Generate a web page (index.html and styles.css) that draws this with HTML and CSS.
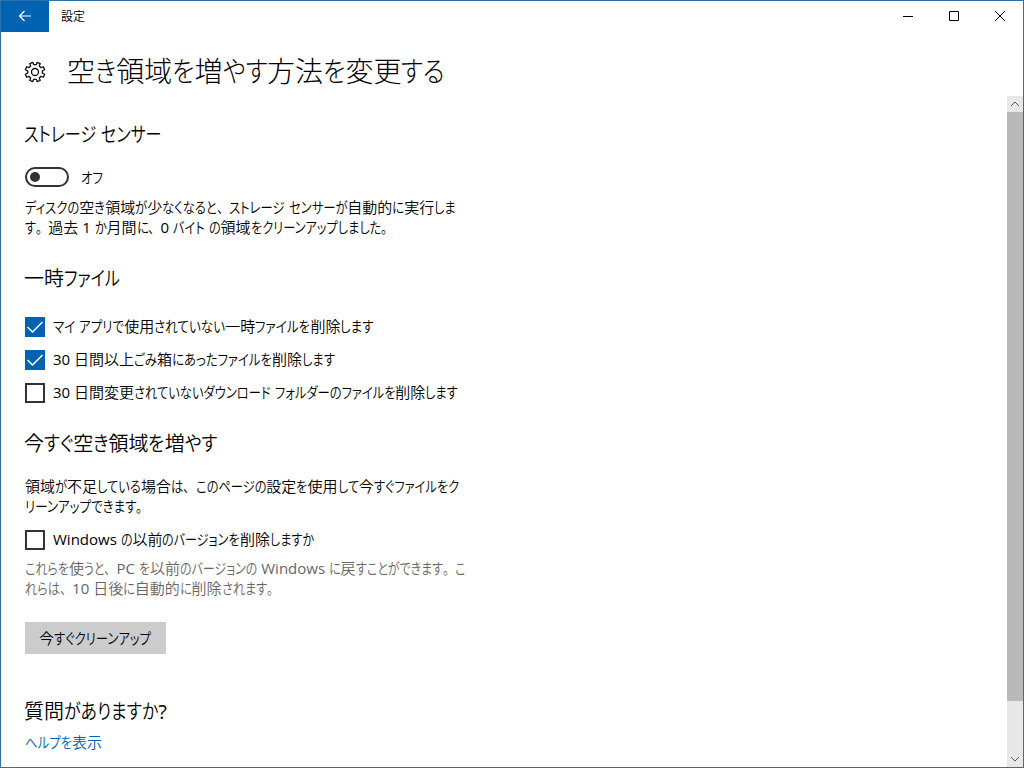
FILE: index.html
```
<!DOCTYPE html>
<html lang="ja">
<head>
<meta charset="utf-8">
<title>設定</title>
<link rel="stylesheet" href="styles.css">
</head>
<body>
<div class="window">
  <header class="titlebar">
    <button class="back" aria-label="戻る"><svg width="14" height="12" viewBox="0 0 14 12"><path d="M13 6H1.5M6.5 1L1.5 6l5 5" /></svg></button>
    <span class="app-name">設定</span>
    <div class="controls">
      <svg width="46" height="31" viewBox="0 0 46 31"><path d="M18 15.5h10"/></svg>
      <svg width="46" height="31" viewBox="0 0 46 31"><path d="M18.500 10.500h9v9h-9z"/></svg>
      <svg width="46" height="31" viewBox="0 0 46 31"><path d="M18 10l10 10M28 10L18 20"/></svg>
    </div>
  </header>
  <div class="heading">
    <svg class="gear" width="22" height="22" viewBox="-11 -11 22 22"><path id="gear" d=""/><circle r="3.500"/></svg>
    <h1 class="line" data-width="378">空き領域を増やす方法を変更する</h1>
  </div>
  <div class="body">
    <main class="content">
      <h2 class="line" data-width="138">ストレージ センサー</h2>
      <div class="switch-row"><span class="switch"></span><span class="line" data-width="22">オフ</span></div>
      <p class="text">
        <span class="line" data-width="431">ディスクの空き領域が少なくなると、ストレージ センサーが自動的に実行しま</span>
        <span class="line" data-width="368">す。過去 1 か月間に、0 バイト の領域をクリーンアップしました。</span>
      </p>
      <h2 class="line temp-title" data-width="96">一時ファイル</h2>
      <div class="options">
        <label class="option"><span class="box checked"><svg width="20" height="20" viewBox="0 0 20 20"><path d="M2.500 10l5 5L17.500 5"/></svg></span><span class="line" data-width="321">マイ アプリで使用されていない一時ファイルを削除します</span></label>
        <label class="option"><span class="box checked"><svg width="20" height="20" viewBox="0 0 20 20"><path d="M2.500 10l5 5L17.500 5"/></svg></span><span class="line" data-width="282">30 日間以上ごみ箱にあったファイルを削除します</span></label>
        <label class="option"><span class="box"></span><span class="line" data-width="405">30 日間変更されていないダウンロード フォルダーのファイルを削除します</span></label>
      </div>
      <h2 class="line now-title" data-width="193">今すぐ空き領域を増やす</h2>
      <p class="text now-text">
        <span class="line" data-width="434">領域が不足している場合は、このページの設定を使用して今すぐファイルをク</span>
        <span class="line" data-width="124">リーンアップできます。</span>
      </p>
      <label class="option previous"><span class="box"></span><span class="line" data-width="261">Windows の以前のバージョンを削除しますか</span></label>
      <p class="text muted">
        <span class="line" data-width="440">これらを使うと、PC を以前のバージョンの Windows に戻すことができます。こ</span>
        <span class="line" data-width="254">れらは、10 日後に自動的に削除されます。</span>
      </p>
      <button class="clean"><span class="line" data-width="112">今すぐクリーンアップ</span></button>
      <h2 class="line help-title" data-width="143">質問がありますか?</h2>
      <a class="help"><span class="line" data-width="77">ヘルプを表示</span></a>
    </main>
    <div class="scrollbar">
      <svg width="16" height="16" viewBox="0 0 16 16"><path d="M4 10l4-4 4 4"/></svg>
      <div class="thumb"></div>
      <div class="track"></div>
      <svg width="16" height="16" viewBox="0 0 16 16"><path d="M4 6l4 4 4-4"/></svg>
    </div>
  </div>
</div>
<script src="script.js"></script>
</body>
</html>
```
FILE: styles.css
```
* { box-sizing: border-box; }
body { margin: 0; background: #fff; color: #000; font: 350 15px/20px "Open Sans", "Noto Sans CJK JP", sans-serif; }
svg { display: block; fill: none; stroke: currentColor; flex: none; }
h1, h2, p { margin: 0; }
button { border: 0; padding: 0; font: inherit; color: inherit; }
.window { width: 1024px; height: 768px; border: 1px solid #2c72ad; display: flex; flex-direction: column; overflow: hidden; }
.titlebar { height: 31px; display: flex; }
.back { width: 48px; padding-bottom: 2px; background: #0063b1; color: #fff; display: flex; align-items: center; justify-content: center; }
.back svg { stroke-width: 1.2; }
.app-name { padding-left: 12px; font-size: 12px; line-height: 32px; }
.controls { display: flex; margin-left: auto; }
.heading { height: 64px; display: flex; padding-left: 23px; }
.gear { margin-top: 29px; stroke-width: 1.3; stroke-linejoin: round; color: #111; }
h1 { margin: 19px 0 0 21px; font-size: 28px; line-height: 40px; font-weight: 300; }
h2 { margin-left: -1px; font-size: 20px; line-height: 28px; font-weight: 350; }
.line { display: block; white-space: pre; width: max-content; }
.kana, .mark { display: inline-block; transform-origin: 0 50%; }
.kana { font-feature-settings: "palt"; }
.latin { font-weight: 400; }
.body { flex: 1; display: flex; min-height: 0; }
.content { flex: 1; padding: 25px 0 0 24px; }
.switch-row { display: flex; align-items: center; gap: 12px; height: 20px; margin-top: 18px; }
.switch { width: 44px; height: 20px; border: 2px solid #333; border-radius: 10px; padding: 3px; }
.switch::before { content: ""; display: block; width: 10px; height: 10px; border-radius: 50%; background: #333; }
.text { margin-top: 10px; }
.temp-title { margin-top: 28px; }
.options { display: flex; flex-direction: column; gap: 13px; margin-top: 24px; }
.option { display: flex; gap: 8px; height: 20px; }
.option .line { line-height: 18px; }
.box { width: 20px; height: 20px; border: 2px solid #333; }
.checked { border: 0; background: #0063b1; color: #fff; }
.checked svg { stroke-width: 1.5; }
.now-title { margin-top: 27px; }
.now-text { margin-top: 18px; }
.previous { margin-top: 14px; }
.muted { margin-top: 8px; color: #666; }
.clean { display: block; width: 141px; height: 32px; margin-top: 24px; padding-left: 14px; background: #ccc; text-align: left; }
.help-title { margin-top: 44px; }
.help { display: block; margin-top: 6px; color: #0063b1; }
.scrollbar { width: 16px; display: flex; flex-direction: column; background: #e8e8e8; color: #555; }
.thumb { height: 589px; background: #b9b9b9; }
.track { flex: 1; }
```
FILE: script.js
```
// Condense the kana of each line so that it keeps its set width.
for (const line of document.querySelectorAll('.line')) {
  const parts = line.textContent.match(/[ぁ-ヿ]+|[、。]|[A-Za-z0-9?]+|[^ぁ-ヿ、。A-Za-z0-9?]+/g);
  line.textContent = '';
  const runs = [];
  for (const part of parts) {
    if (!/^[ぁ-ヿ、。A-Za-z0-9?]/.test(part)) { line.append(part); continue; }
    const run = document.createElement('span');
    run.textContent = part;
    line.append(run);
    if (/^[A-Za-z0-9?]/.test(part)) { run.className = 'latin'; continue; }
    run.className = /[、。]/.test(part) ? 'mark' : 'kana';
    runs.push(run);
  }
  const total = line.getBoundingClientRect().width;
  const widths = runs.map(run => run.getBoundingClientRect().width);
  const sum = widths.reduce((a, b) => a + b, 0);
  const ratio = (Number(line.dataset.width) - total + sum) / sum;
  runs.forEach((run, i) => {
    run.style.transform = `scaleX(${ratio})`;
    run.style.marginRight = `${widths[i] * (ratio - 1)}px`;
  });
}

// Outline of the eight-toothed gear.
const points = [];
for (let tooth = 0; tooth < 8; tooth++) {
  for (const [offset, radius] of [[-13, 7.4], [-9.5, 9.9], [9.5, 9.9], [13, 7.4]]) {
    const angle = (tooth * 45 + 22.5 + offset) * Math.PI / 180;
    points.push(`${(radius * Math.cos(angle)).toFixed(2)} ${(radius * Math.sin(angle)).toFixed(2)}`);
  }
}
document.getElementById('gear').setAttribute('d', `M${points.join('L')}Z`);
```
